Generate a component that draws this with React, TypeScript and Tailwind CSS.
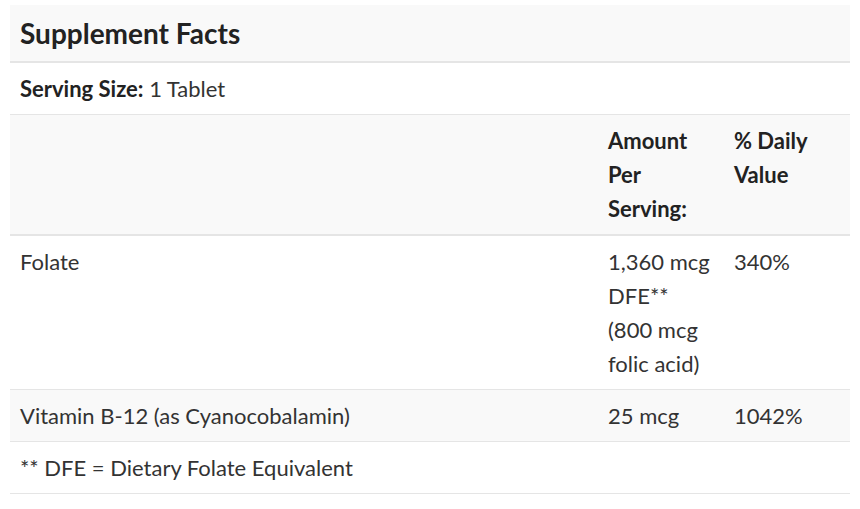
import React from 'react';

const rows = [
    { name: 'Folate', amount: ['1,360 mcg', 'DFE**', '(800 mcg', 'folic acid)'], dv: '340%' },
    { name: 'Vitamin B-12 (as Cyanocobalamin)', amount: ['25 mcg'], dv: '1042%' },
];

const App: React.FC = () => {
    return (
        <div className="w-[860px] h-[509px] bg-white pt-[5px] px-[10px] text-[#333] font-['Lato',_'Liberation_Sans',_sans-serif] text-[22px]">
            <table className="w-[840px] border-collapse table-fixed">
                <colgroup>
                    <col className="w-[588px]" />
                    <col className="w-[126px]" />
                    <col className="w-[126px]" />
                </colgroup>
                <tbody>
                    <tr className="bg-[#f9f9f9] border-b-2 border-[#e5e5e5]">
                        <th colSpan={3} className="text-left px-[10px] py-2 leading-[40px] text-[28px] font-bold text-[#222]">
                            Supplement Facts
                        </th>
                    </tr>
                    <tr className="border-b border-[#e5e5e5]">
                        <td colSpan={3} className="px-[10px] pt-[9px] pb-2 leading-[34px]">
                            <b className="font-bold text-[#222]">Serving Size:</b> 1 Tablet
                        </td>
                    </tr>
                    <tr className="bg-[#f9f9f9] border-b-2 border-[#e5e5e5]">
                        <th></th>
                        <th className="text-left align-top px-[10px] pt-[9px] pb-2 leading-[34px] font-bold text-[#222]">
                            Amount Per Serving:
                        </th>
                        <th className="text-left align-top px-[10px] pt-[9px] pb-2 leading-[34px] font-bold text-[#222]">
                            % Daily Value
                        </th>
                    </tr>
                    {rows.map((r, i) => (
                        <tr key={r.name} className={`border-b border-[#e5e5e5] ${i % 2 === 1 ? 'bg-[#f9f9f9]' : ''}`}>
                            <td className="align-top px-[10px] pt-[9px] pb-2 leading-[34px]">{r.name}</td>
                            <td className="align-top px-[10px] pt-[9px] pb-2 leading-[34px]">
                                {r.amount.map((a, j) => <div key={j}>{a}</div>)}
                            </td>
                            <td className="align-top px-[10px] pt-[9px] pb-2 leading-[34px]">{r.dv}</td>
                        </tr>
                    ))}
                    <tr className="border-b border-[#e5e5e5]">
                        <td colSpan={3} className="px-[10px] pt-[9px] pb-2 leading-[34px]">
                            ** DFE = Dietary Folate Equivalent
                        </td>
                    </tr>
                </tbody>
            </table>
        </div>
    );
};

export default App;
